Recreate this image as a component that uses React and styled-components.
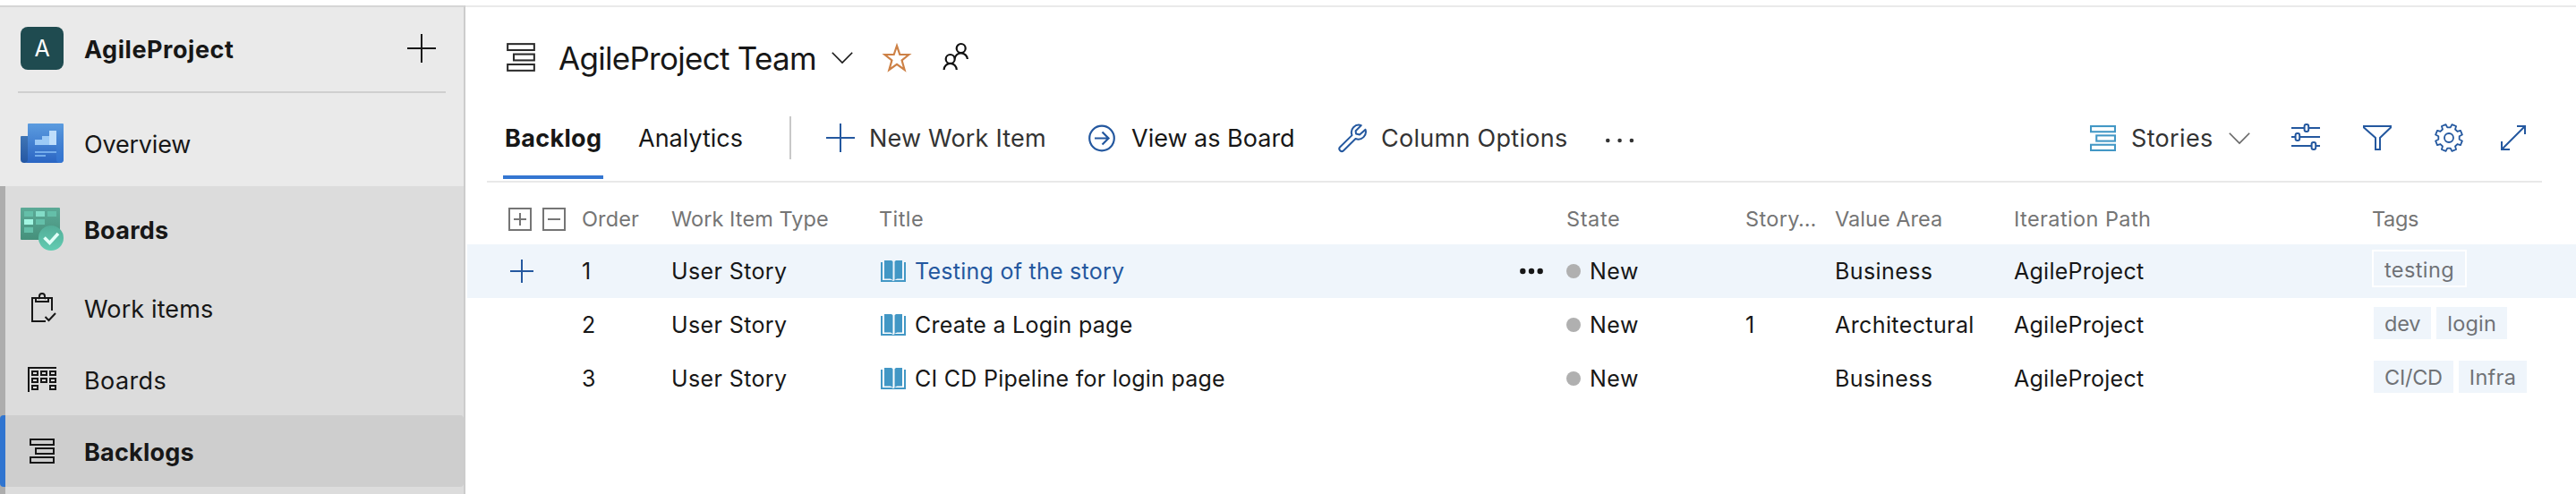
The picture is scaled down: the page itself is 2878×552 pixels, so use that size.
import React from "react";
import styled, { createGlobalStyle, css } from "styled-components";

const GlobalStyle = createGlobalStyle`
  *, *::before, *::after { box-sizing: border-box; }
  body {
    margin: 0;
    background: #fff;
    color: #171717;
    font-family: Inter, "Liberation Sans", sans-serif;
  }
  svg { display: block; flex: none; overflow: visible; }
`;

/* ---------- layout ---------- */

const Page = styled.div`
  display: flex;
  height: 552px;
  padding-top: 6px;
  overflow: hidden;
`;

const Sidebar = styled.nav`
  display: flex;
  flex-direction: column;
  flex: none;
  width: 520px;
  background: #eaeaea;
  border-top: 2px solid #d6d6d6;
  border-right: 2px solid #cccccc;
`;

const Main = styled.main`
  flex: 1;
  min-width: 0;
  border-top: 2px solid #eaeaea;
`;

const Label = styled.span`
  white-space: nowrap;
  letter-spacing: ${(p) => p.$track || 0}px;
`;

/* ---------- sidebar ---------- */

const ProjectHeader = styled.div`
  display: flex;
  align-items: center;
  box-sizing: content-box;
  height: 92px;
  margin: 0 20px;
  padding: 0 11px 2px 3px;
  border-bottom: 2px solid #cfcfcf;
`;

const Avatar = styled.div`
  width: 48px;
  height: 48px;
  border-radius: 8px;
  background: #1f4b50;
  color: #fff;
  font-size: 25px;
  font-weight: 400;
  line-height: 49px;
  text-align: center;
`;

const ProjectName = styled(Label)`
  flex: 1;
  margin-left: 23px;
  padding-top: 2px;
  font-size: 27px;
  font-weight: 700;
`;

const NavItem = styled.a`
  display: flex;
  align-items: center;
  gap: 23px;
  height: 80px;
  padding-left: 23px;
  font-size: 27px;
  font-weight: ${(p) => (p.$bold ? 700 : 400)};
  ${(p) =>
    p.$current &&
    css`
      border-left: 6px solid #3075d0;
      border-radius: 4px;
      padding-left: 17px;
      background: #cecece;
    `}
`;

const NavLabel = styled(Label)`
  padding-top: 2px;
`;

const TopSection = styled.div`
  padding: 16px 0 8px;
`;

const HubSection = styled.div`
  flex: 1;
  padding-top: 8px;
  background: linear-gradient(to right, #adadad 6px, #dcdcdc 6px);
`;

const SubItems = styled.div`
  padding-top: 8px;
`;

/* ---------- main header ---------- */

const TitleBar = styled.header`
  display: flex;
  align-items: center;
  height: 112px;
  padding-left: 46px;
`;

const TeamName = styled(Label)`
  margin: 0 17px 0 26px;
  padding-top: 2px;
  font-size: 35px;
`;

const TitleActions = styled.div`
  display: flex;
  align-items: center;
  gap: 34px;
  margin-left: 32px;
`;

const CommandBar = styled.div`
  display: flex;
  height: 84px;
  margin: 0 38px 0 24px;
  padding: 0 16px 0 18px;
  border-bottom: 2px solid #e8e8e8;
`;

const Tab = styled.a`
  width: ${(p) => p.$width}px;
  height: 80px;
  padding-left: ${(p) => (p.$active ? 2 : 1)}px;
  border-bottom: 4px solid ${(p) => (p.$active ? "#3476d1" : "transparent")};
  font-size: 27px;
  font-weight: ${(p) => (p.$active ? 700 : 400)};
  line-height: 70px;
  & + & { margin-left: 38px; }
`;

const Commands = styled.div`
  display: flex;
  align-items: center;
  height: 68px;
`;

const Divider = styled.div`
  width: 2px;
  height: 48px;
  margin: 0 39px 0 50px;
  background: #c8c8c8;
`;

const Command = styled.button`
  display: flex;
  align-items: center;
  gap: 16px;
  width: ${(p) => p.$width}px;
  padding: 0;
  border: 0;
  background: none;
  color: ${(p) => (p.$strong ? "#171717" : "#333333")};
  font: 400 27px Inter, "Liberation Sans", sans-serif;
`;

const ViewTools = styled(Commands)`
  margin-left: auto;
  gap: 48px;
`;

const LevelPicker = styled(Command)`
  width: 177px;
  gap: 17px;
  & > :last-child { margin-left: auto; }
`;

const ExpandSlot = styled.div`
  margin-left: -8px;
`;

/* ---------- grid ---------- */

const Table = styled.div`
  margin-left: 2px;
  font-size: 25px;
`;

const columns = css`
  display: grid;
  grid-template-columns: 128px 100px 232px 768px 200px 100px 200px 400px 1fr;
`;

const HeadRow = styled.div`
  ${columns}
  align-items: center;
  height: 69px;
  padding-top: 13px;
  color: #757575;
  font-size: 23.5px;
`;

const Row = styled.div`
  ${columns}
  height: 60px;
  background: ${(p) => (p.$active ? "#eff5fb" : "transparent")};
`;

const Cell = styled.div`
  display: flex;
  align-items: center;
  min-width: 0;
`;

const HeadCell = styled(Cell)`
  padding-bottom: 2px;
`;

const ToggleCell = styled(Cell)`
  gap: 12px;
  padding-left: 46px;
`;

const AddCell = styled(Cell)`
  padding-left: 48px;
`;

const TitleCell = styled(Cell)`
  gap: 10px;
  padding: 0 26px 0 2px;
  color: ${(p) => (p.$link ? "#24589f" : "inherit")};
  & > :nth-child(3) { margin-left: auto; }
`;

const StateDot = styled.span`
  width: 16px;
  height: 16px;
  margin-right: 10px;
  border-radius: 50%;
  background: #b0b0b0;
`;

const TagCell = styled(Cell)`
  align-items: flex-start;
  gap: 6px;
  padding: ${(p) => (p.$active ? "6px 0 0" : "10px 0 0 2px")};
`;

const Tag = styled.span`
  height: 36px;
  padding: 0 12px;
  background: #eff5fb;
  color: #6f7276;
  font-size: 23.5px;
  line-height: 38px;
  ${(p) =>
    p.$active &&
    css`
      height: 42px;
      border: 2px solid #fff;
      line-height: 41px;
    `}
`;

/* ---------- icons ---------- */

const LevelsIcon = ({ size = 28, color = "#171717", stroke = 2 }) => (
  <svg width={size} height={size} viewBox="0 0 28 28" fill="none" stroke={color} strokeWidth={stroke}>
    <rect x="1" y="1" width="26" height="6" />
    <rect x="7" y="11" width="20" height="6" />
    <rect x="1" y="21" width="26" height="6" />
  </svg>
);

const PlusIcon = ({ width = 32, height = 32, color = "#24589f" }) => (
  <svg width={width} height={height} stroke={color} strokeWidth="2">
    <path d={`M0 ${height / 2}H${width}M${width / 2} 0V${height}`} />
  </svg>
);

const ChevronIcon = ({ color }) => (
  <svg width="24" height="13" viewBox="0 0 24 13" fill="none" stroke={color} strokeWidth="1.6">
    <path d="M.8.8 12 12 23.2.8" />
  </svg>
);

const OverviewIcon = () => (
  <svg width="48" height="44" viewBox="0 0 48 44">
    <defs>
      <linearGradient id="ovPage" x1="0" y1="0" x2="0" y2="1">
        <stop offset="0" stopColor="#5c9cdf" />
        <stop offset="1" stopColor="#2a65c3" />
      </linearGradient>
      <linearGradient id="ovFold" x1="0" y1="0" x2="0" y2="1">
        <stop offset="0" stopColor="#3f75b5" />
        <stop offset="1" stopColor="#2457a3" />
      </linearGradient>
      <linearGradient id="ovCurl" x1="0" y1="0" x2="0" y2="1">
        <stop offset="0" stopColor="#4c8edb" stopOpacity="0" />
        <stop offset="1" stopColor="#3274d2" />
      </linearGradient>
    </defs>
    <path d="M1 14H9V40a4 4 0 0 1-4 4H4a4 4 0 0 1-4-4V15a1 1 0 0 1 1-1Z" fill="url(#ovFold)" />
    <path d="M9 0H47a1 1 0 0 1 1 1V40a4 4 0 0 1-4 4H4a4 4 0 0 0 4-4V1a1 1 0 0 1 1-1Z" fill="url(#ovPage)" />
    <path d="M40 14h8v26a4 4 0 0 1-8 0Z" fill="url(#ovCurl)" />
    <path d="M16 18h8v-4h8v10H16Z" fill="#9ccaf6" />
    <path d="M32 8h8v16h-8Z" fill="#bfdefb" />
    <path d="M16 31h24v2H16ZM16 35h12v2H16Z" fill="#74adec" />
  </svg>
);

const BoardsHubIcon = () => (
  <svg width="48" height="48" viewBox="0 0 48 48">
    <defs>
      <linearGradient id="bdPage" x1="0" y1="0" x2="0" y2="1">
        <stop offset="0" stopColor="#5caa97" />
        <stop offset="1" stopColor="#45907b" />
      </linearGradient>
      <linearGradient id="bdBadge" x1="0" y1="0" x2="0" y2="1">
        <stop offset="0" stopColor="#53ad98" />
        <stop offset="1" stopColor="#62ccb2" />
      </linearGradient>
    </defs>
    <rect width="44" height="36" rx="1" fill="url(#bdPage)" />
    <path d="M4 4h10v6H4ZM30 4h10v6H30ZM17 13h10v6H17ZM4 22h10v6H4Z" fill="#64bfa9" />
    <path d="M17 4h10v6H17Z" fill="#83dcc7" />
    <path d="M4 13h10v6H4Z" fill="#a2f6e2" />
    <circle cx="34" cy="34" r="14" fill="url(#bdBadge)" />
    <path d="m26.5 33.5 6 6L42 29" fill="none" stroke="#e2fff8" strokeWidth="3.6" />
  </svg>
);

const WorkItemsIcon = () => (
  <svg width="48" height="48" viewBox="0 0 48 48" fill="none" stroke="#171717" strokeWidth="2">
    <path d="M28 39H13V13h22v14" />
    <path d="M17 13v4h14v-4M20 13.5c1 0 1-1 1-2.5a3 3 0 0 1 6 0c0 1.5 0 2.5 1 2.5" />
    <path d="m27.5 34 4 4 7.500-8" />
  </svg>
);

const BoardGridIcon = () => (
  <svg width="48" height="48" viewBox="0 0 48 48" fill="none" stroke="#171717" strokeWidth="2">
    <path d="M40 11H9v27" />
    <path d="M13 15h6v4h-6ZM23 15h6v4h-6ZM33 15h6v4h-6ZM13 23h6v4h-6ZM23 23h6v4h-6ZM33 23h6v4h-6ZM13 31h6v4h-6ZM33 31h6v4h-6Z" />
  </svg>
);

const NavLevelsIcon = () => (
  <svg width="48" height="48" viewBox="0 0 48 48" fill="none" stroke="#171717" strokeWidth="2">
    <path d="M11 11h26v6H11ZM17 21h20v6H17ZM11 31h26v6H11Z" />
  </svg>
);

const StarIcon = () => (
  <svg width="34" height="34" viewBox="0 0 34 34" fill="none" stroke="#cd8146" strokeWidth="2.2">
    <path d="M17 4.200 20.300 14H30.500L22.600 20.500 25.600 31 17 24.800 8.400 31 11.400 20.500 3.500 14H13.700Z" />
  </svg>
);

const PeopleIcon = () => (
  <svg width="30" height="32" viewBox="0 0 30 32" fill="none" stroke="#111" strokeWidth="2.2">
    <circle cx="20.7" cy="6" r="5" />
    <circle cx="8.7" cy="18" r="5" />
    <path d="M1.600 30a7.100 7.100 0 0 1 14.200 0M13.600 17.500A7.200 7.200 0 0 1 27.900 18" />
  </svg>
);

const ArrowCircleIcon = () => (
  <svg width="32" height="32" viewBox="0 0 32 32" fill="none" stroke="#24589f" strokeWidth="2.2">
    <circle cx="15" cy="16.5" r="13.8" />
    <path d="M7 16.5h15.5M15.5 9.500l7 7-7 7" />
  </svg>
);

const WrenchIcon = () => (
  <svg width="32" height="32" viewBox="0 0 32 32" fill="none" stroke="#24589f" strokeWidth="2" strokeLinejoin="round">
    <path d="M25.800 2.100a8.300 8.300 0 0 0-10.300 11L2.200 26.300a2.750 2.750 0 0 0 3.900 3.900L19.500 17A8.300 8.300 0 0 0 30.500 6.800L24 12.500 20 11.500 19.600 8.300Z" />
  </svg>
);

const DotsIcon = ({ r = 2.3, gap = 13.3, color = "#333" }) => (
  <svg width="32" height="12" viewBox="0 -4 32 12" fill={color}>
    {[0, 1, 2].map((i) => (
      <circle key={i} cx={r + i * gap} cy="5" r={r} />
    ))}
  </svg>
);

const RowMenuIcon = () => (
  <svg width="26" height="8" viewBox="0 0 26 8" fill="#171717">
    <circle cx="3.3" cy="4" r="3.2" />
    <circle cx="13" cy="4" r="3.2" />
    <circle cx="22.7" cy="4" r="3.2" />
  </svg>
);

const SlidersIcon = () => (
  <svg width="32" height="32" viewBox="0 0 32 32" fill="none" stroke="#24589f" strokeWidth="2">
    <path d="M0 5h14.500M19.500 5H32M0 15h4.500M9.500 15H32M0 25h22.500M27.500 25H32" />
    <rect x="14.6" y="1" width="4.6" height="8" rx="2" />
    <rect x="4.6" y="11" width="4.6" height="8" rx="2" />
    <rect x="22.6" y="21" width="4.6" height="8" rx="2" />
  </svg>
);

const FilterIcon = () => (
  <svg width="32" height="32" viewBox="0 0 32 32" fill="none" stroke="#24589f" strokeWidth="2">
    <path d="M1 3h30v1.500L19 16v13h-5V16L1 4.500Z" />
  </svg>
);

const gearPath = (() => {
  const pts = [];
  for (let i = 0; i < 8; i += 1) {
    const mid = i * 45 + 22.5;
    [[-14, 11.8], [-9.5, 15.3], [9.5, 15.3], [14, 11.8]].forEach(([da, r]) => {
      const a = ((mid + da) * Math.PI) / 180;
      pts.push(`${(16 + r * Math.sin(a)).toFixed(2)} ${(16 - r * Math.cos(a)).toFixed(2)}`);
    });
  }
  return `M${pts.join("L")}Z`;
})();

const GearIcon = () => (
  <svg width="32" height="32" viewBox="0 0 32 32" fill="none" stroke="#24589f" strokeWidth="1.8" strokeLinejoin="round">
    <path d={gearPath} />
    <circle cx="16" cy="16" r="5" />
  </svg>
);

const ExpandIcon = () => (
  <svg width="32" height="32" viewBox="0 0 32 32" fill="none" stroke="#24589f" strokeWidth="2">
    <path d="M3 29 29 3M20 3h9v9M3 20v9h9" />
  </svg>
);

const ToggleIcon = ({ plus }) => (
  <svg width="26" height="26" viewBox="0 0 26 26" fill="none" stroke="#757575" strokeWidth="2">
    <path d="M1 1h24v24H1ZM6 13h14" />
    {plus && <path d="M13 6v14" />}
  </svg>
);

const BookIcon = () => (
  <svg width="28" height="24" viewBox="0 0 28 24" fill="#4297c5">
    <path d="M4 0h7c1.300 0 2.200.6 2.500 1.400V22c-.8-1-2.200-1.600-4-1.600H4Z" />
    <path d="M24 0h-6c-1.300 0-2.200.6-2.500 1.400V22c.8-1 2.200-1.600 4-1.600H24Z" />
    <path d="M0 2h2v20h9.500c1 0 1.800.4 2.500 1.200.7-.8 1.500-1.200 2.500-1.200H26V2h2v22H0Z" />
  </svg>
);

/* ---------- data ---------- */

const headings = [
  ["Order", 0.12],
  ["Work Item Type", 0.07],
  ["Title", 0.44],
  ["State", 0.62],
  ["Story…", 0.34],
  ["Value Area", 0.03],
  ["Iteration Path", 0.41],
  ["Tags", -0.35],
];

const stories = [
  {
    order: 1,
    title: "Testing of the story",
    points: "",
    area: "Business",
    tags: [["testing", 0.4]],
    active: true,
  },
  {
    order: 2,
    title: "Create a Login page",
    points: "1",
    area: "Architectural",
    tags: [["dev", -0.2], ["login", 0.2]],
  },
  {
    order: 3,
    title: "CI CD Pipeline for login page",
    points: "",
    area: "Business",
    tags: [["CI/CD", -0.25], ["Infra", 0.3]],
  },
];

function StoryRow({ story }) {
  return (
    <Row $active={story.active}>
      <AddCell>{story.active && <PlusIcon width={26} height={26} />}</AddCell>
      <Cell>{story.order}</Cell>
      <Cell><Label $track={0.38}>User Story</Label></Cell>
      <TitleCell $link={story.active}>
        <BookIcon />
        <Label $track={0.26}>{story.title}</Label>
        {story.active && <RowMenuIcon />}
      </TitleCell>
      <Cell>
        <StateDot />
        <Label $track={0.52}>New</Label>
      </Cell>
      <Cell>{story.points}</Cell>
      <Cell><Label $track={0.4}>{story.area}</Label></Cell>
      <Cell><Label $track={0.26}>AgileProject</Label></Cell>
      <TagCell $active={story.active}>
        {story.tags.map(([name, track]) => (
          <Tag key={name} $active={story.active}>
            <Label $track={track}>{name}</Label>
          </Tag>
        ))}
      </TagCell>
    </Row>
  );
}

export default function App() {
  return (
    <>
      <GlobalStyle />
      <Page>
        <Sidebar>
          <ProjectHeader>
            <Avatar>A</Avatar>
            <ProjectName $track={0.55}>AgileProject</ProjectName>
            <PlusIcon color="#171717" />
          </ProjectHeader>
          <TopSection>
            <NavItem>
              <OverviewIcon />
              <NavLabel $track={-0.2}>Overview</NavLabel>
            </NavItem>
          </TopSection>
          <HubSection>
            <NavItem $bold>
              <BoardsHubIcon />
              <NavLabel $track={0.26}>Boards</NavLabel>
            </NavItem>
            <SubItems>
              <NavItem>
                <WorkItemsIcon />
                <NavLabel $track={0.12}>Work items</NavLabel>
              </NavItem>
              <NavItem>
                <BoardGridIcon />
                <NavLabel $track={0.4}>Boards</NavLabel>
              </NavItem>
              <NavItem $bold $current>
                <NavLevelsIcon />
                <NavLabel $track={0.2}>Backlogs</NavLabel>
              </NavItem>
            </SubItems>
          </HubSection>
        </Sidebar>

        <Main>
          <TitleBar>
            <LevelsIcon size={32} stroke={1.8} color="#2b2b2b" />
            <TeamName $track={-0.71}>AgileProject Team</TeamName>
            <ChevronIcon color="#171717" />
            <TitleActions>
              <StarIcon />
              <PeopleIcon />
            </TitleActions>
          </TitleBar>

          <CommandBar>
            <Tab $active $width={112}><Label $track={0.34}>Backlog</Label></Tab>
            <Tab $width={120}><Label>Analytics</Label></Tab>
            <Commands>
              <Divider />
              <Command $width={293}>
                <PlusIcon />
                <Label $track={0.19}>New Work Item</Label>
              </Command>
              <Command $width={279} $strong>
                <ArrowCircleIcon />
                <Label>View as Board</Label>
              </Command>
              <Command $width={299}>
                <WrenchIcon />
                <Label $track={0.28}>Column Options</Label>
              </Command>
              <DotsIcon />
            </Commands>
            <ViewTools>
              <LevelPicker>
                <LevelsIcon size={29} color="#4297c5" />
                <Label $track={0.34}>Stories</Label>
                <ChevronIcon color="#666" />
              </LevelPicker>
              <SlidersIcon />
              <FilterIcon />
              <GearIcon />
              <ExpandSlot><ExpandIcon /></ExpandSlot>
            </ViewTools>
          </CommandBar>

          <Table>
            <HeadRow>
              <ToggleCell>
                <ToggleIcon plus />
                <ToggleIcon />
              </ToggleCell>
              {headings.map(([name, track]) => (
                <HeadCell key={name}><Label $track={track}>{name}</Label></HeadCell>
              ))}
            </HeadRow>
            {stories.map((story) => (
              <StoryRow key={story.order} story={story} />
            ))}
          </Table>
        </Main>
      </Page>
    </>
  );
}
